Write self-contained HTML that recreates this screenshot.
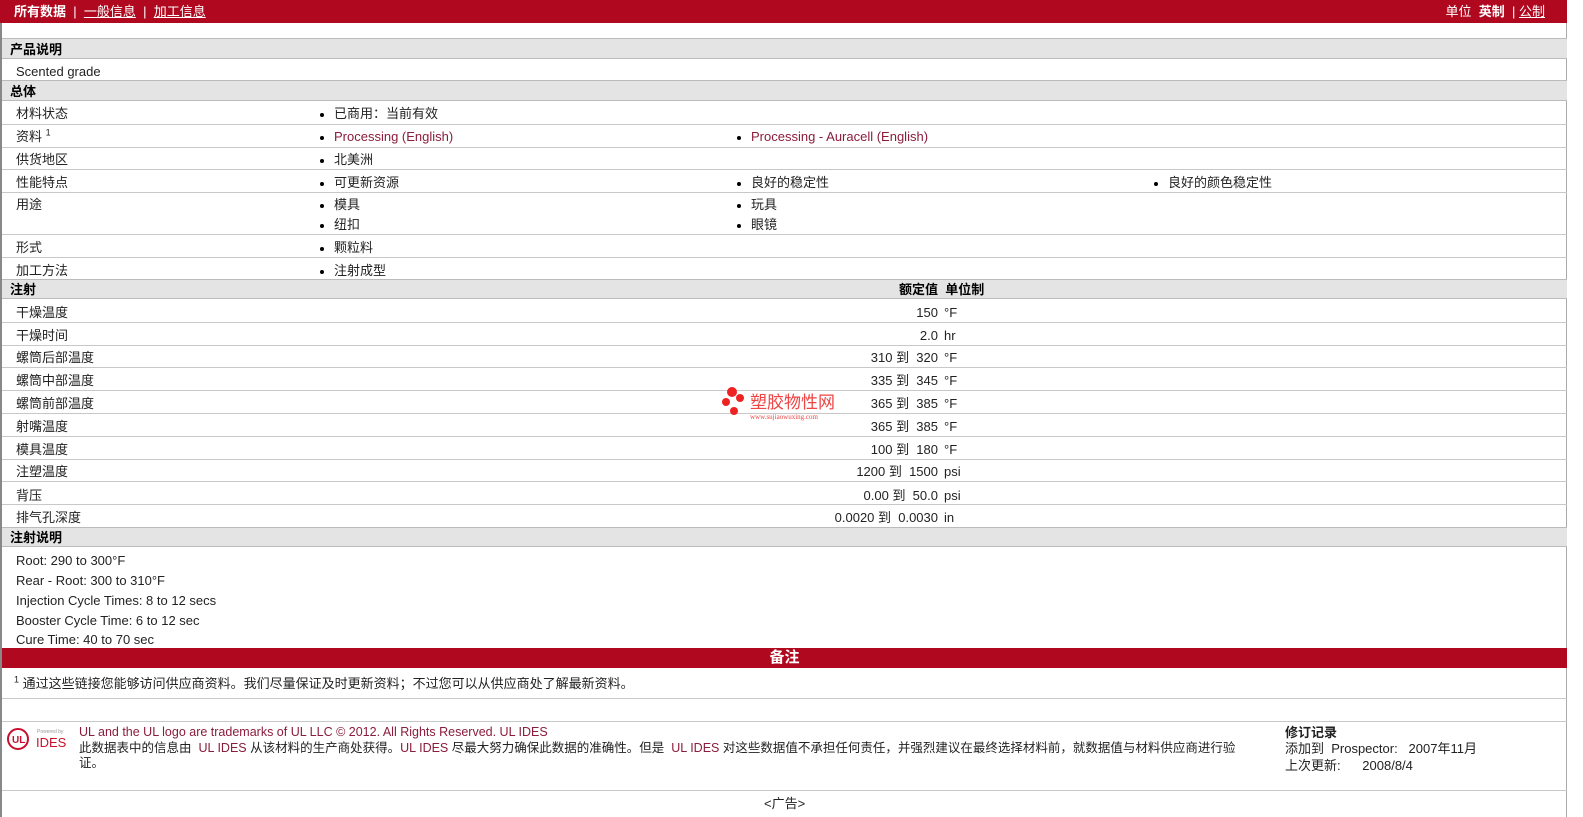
<!DOCTYPE html>
<html><head><meta charset="utf-8"><style>
body{margin:0;width:1583px;height:817px;background:#fff;font-family:"Liberation Sans","Noto Sans CJK SC",sans-serif;font-size:13px;line-height:15px;color:#222;position:relative;overflow:hidden}
.a{position:absolute;white-space:nowrap}
.top{position:absolute;left:0;top:0;width:1567px;height:23px;background:#b0091f;color:#fff}
.sh{position:absolute;left:2px;width:1565px;background:#e4e4e4;border-top:1px solid #bbb;border-bottom:1px solid #bbb;font-weight:bold;color:#000}
.ln{position:absolute;left:2px;width:1565px;height:1px;background:#c8c8c8}
.b::before{content:"";display:inline-block;width:4px;height:4px;border-radius:2px;background:#000;margin-right:10px;vertical-align:middle}
.lk{color:#8a1c3c}
.v{position:absolute;right:645px;text-align:right;white-space:nowrap}
</style></head><body>
<div style="position:absolute;left:0;top:0;width:2px;height:817px;background:#888"></div>
<div style="position:absolute;left:1566px;top:23px;width:1px;height:794px;background:#aaa"></div>
<div class="top">
<span class="a" style="left:14px;top:4px"><b>所有数据</b> &nbsp;| &nbsp;<u>一般信息</u> &nbsp;| &nbsp;<u>加工信息</u></span>
<span class="a" style="right:22px;top:4px">单位 &nbsp;<b>英制</b> &nbsp;| <u>公制</u></span>
</div>
<div class="sh" style="top:38px;height:19px"><span class="a" style="left:8px;top:3px">产品说明</span></div>
<span class="a" style="left:16px;top:64px">Scented grade</span>
<div class="sh" style="top:80px;height:19px"><span class="a" style="left:8px;top:3px">总体</span></div>
<span class="a" style="left:16px;top:106px">材料状态</span><span class="a b" style="left:320px;top:106px">已商用：当前有效</span>
<div class="ln" style="top:124px"></div>
<span class="a" style="left:16px;top:129px">资料 <sup style="font-size:9px;line-height:0">1</sup></span><span class="a b lk" style="left:320px;top:129px">Processing (English)</span><span class="a b lk" style="left:737px;top:129px">Processing - Auracell (English)</span>
<div class="ln" style="top:147px"></div>
<span class="a" style="left:16px;top:152px">供货地区</span><span class="a b" style="left:320px;top:152px">北美洲</span>
<div class="ln" style="top:169px"></div>
<span class="a" style="left:16px;top:175px">性能特点</span><span class="a b" style="left:320px;top:175px">可更新资源</span><span class="a b" style="left:737px;top:175px">良好的稳定性</span><span class="a b" style="left:1154px;top:175px">良好的颜色稳定性</span>
<div class="ln" style="top:192px"></div>
<span class="a" style="left:16px;top:197px">用途</span><span class="a b" style="left:320px;top:197px">模具</span><span class="a b" style="left:737px;top:197px">玩具</span><span class="a b" style="left:320px;top:217px">纽扣</span><span class="a b" style="left:737px;top:217px">眼镜</span>
<div class="ln" style="top:234px"></div>
<span class="a" style="left:16px;top:240px">形式</span><span class="a b" style="left:320px;top:240px">颗粒料</span>
<div class="ln" style="top:257px"></div>
<span class="a" style="left:16px;top:263px">加工方法</span><span class="a b" style="left:320px;top:263px">注射成型</span>
<div class="sh" style="top:279px;height:18px"><span class="a" style="left:8px;top:2px">注射</span><span class="a" style="left:897px;top:2px">额定值 &nbsp;单位制</span></div>
<span class="a" style="left:16px;top:305px">干燥温度</span><span class="v" style="top:305px">150</span><span class="a" style="left:944px;top:305px">°F</span>
<div class="ln" style="top:322px"></div>
<span class="a" style="left:16px;top:328px">干燥时间</span><span class="v" style="top:328px">2.0</span><span class="a" style="left:944px;top:328px">hr</span>
<div class="ln" style="top:345px"></div>
<span class="a" style="left:16px;top:350px">螺筒后部温度</span><span class="v" style="top:350px">310 到 &nbsp;320</span><span class="a" style="left:944px;top:350px">°F</span>
<div class="ln" style="top:367px"></div>
<span class="a" style="left:16px;top:373px">螺筒中部温度</span><span class="v" style="top:373px">335 到 &nbsp;345</span><span class="a" style="left:944px;top:373px">°F</span>
<div class="ln" style="top:390px"></div>
<span class="a" style="left:16px;top:396px">螺筒前部温度</span><span class="v" style="top:396px">365 到 &nbsp;385</span><span class="a" style="left:944px;top:396px">°F</span>
<div class="ln" style="top:413px"></div>
<span class="a" style="left:16px;top:419px">射嘴温度</span><span class="v" style="top:419px">365 到 &nbsp;385</span><span class="a" style="left:944px;top:419px">°F</span>
<div class="ln" style="top:436px"></div>
<span class="a" style="left:16px;top:442px">模具温度</span><span class="v" style="top:442px">100 到 &nbsp;180</span><span class="a" style="left:944px;top:442px">°F</span>
<div class="ln" style="top:459px"></div>
<span class="a" style="left:16px;top:464px">注塑温度</span><span class="v" style="top:464px">1200 到 &nbsp;1500</span><span class="a" style="left:944px;top:464px">psi</span>
<div class="ln" style="top:481px"></div>
<span class="a" style="left:16px;top:488px">背压</span><span class="v" style="top:488px">0.00 到 &nbsp;50.0</span><span class="a" style="left:944px;top:488px">psi</span>
<div class="ln" style="top:504px"></div>
<span class="a" style="left:16px;top:510px">排气孔深度</span><span class="v" style="top:510px">0.0020 到 &nbsp;0.0030</span><span class="a" style="left:944px;top:510px">in</span>
<div class="sh" style="top:527px;height:18px"><span class="a" style="left:8px;top:2px">注射说明</span></div>
<span class="a" style="left:16px;top:553px">Root: 290 to 300°F</span>
<span class="a" style="left:16px;top:573px">Rear - Root: 300 to 310°F</span>
<span class="a" style="left:16px;top:593px">Injection Cycle Times: 8 to 12 secs</span>
<span class="a" style="left:16px;top:613px">Booster Cycle Time: 6 to 12 sec</span>
<span class="a" style="left:16px;top:632px">Cure Time: 40 to 70 sec</span>
<div style="position:absolute;left:2px;top:648px;width:1565px;height:20px;background:#b0091f;color:#fff;font-weight:bold;font-size:15px;text-align:center;line-height:20px">备注</div>
<span class="a" style="left:14px;top:676px"><sup style="font-size:9px;line-height:0">1</sup> 通过这些链接您能够访问供应商资料。我们尽量保证及时更新资料；不过您可以从供应商处了解最新资料。</span>
<div class="ln" style="top:698px"></div>
<div class="ln" style="top:721px"></div>
<svg class="a" style="left:6px;top:726px" width="64" height="26"><circle cx="12" cy="13" r="10" fill="none" stroke="#c8102e" stroke-width="2"/><text x="6" y="17" font-size="10" fill="#c8102e" font-weight="bold" font-family="Liberation Sans">UL</text><text x="31" y="7" font-size="5" fill="#999" font-family="Liberation Sans">Powered by</text><text x="30" y="21" font-size="13" fill="#c8102e" font-family="Liberation Sans">IDES</text></svg>
<span class="a lk" style="left:79px;top:725px;font-size:12.5px">UL and the UL logo are trademarks of UL LLC © 2012. All Rights Reserved. UL IDES</span>
<span class="a" style="left:79px;top:741px;font-size:12.5px">此数据表中的信息由 <span class="lk">&nbsp;UL IDES</span> 从该材料的生产商处获得。<span class="lk">UL IDES</span> 尽最大努力确保此数据的准确性。但是 <span class="lk">&nbsp;UL IDES</span> 对这些数据值不承担任何责任，并强烈建议在最终选择材料前，就数据值与材料供应商进行验</span>
<span class="a" style="left:79px;top:756px;font-size:12.5px">证。</span>
<span class="a" style="left:1285px;top:725px;font-weight:bold">修订记录</span>
<span class="a" style="left:1285px;top:741px">添加到 &nbsp;Prospector: &nbsp;&nbsp;2007年11月</span>
<span class="a" style="left:1285px;top:758px">上次更新: &nbsp;&nbsp;&nbsp;&nbsp;&nbsp;2008/8/4</span>
<div class="ln" style="top:790px"></div>
<span class="a" style="left:764px;top:796px">&lt;广告&gt;</span>
<svg class="a" style="left:720px;top:386px" width="130" height="36"><circle cx="12" cy="6" r="5" fill="#e22"/><circle cx="20" cy="12" r="4" fill="#e22"/><circle cx="6" cy="16" r="4" fill="#e22"/><circle cx="14" cy="25" r="4" fill="#e22"/><text x="30" y="22" font-size="17" fill="#e44" font-family="Noto Sans CJK SC">塑胶物性网</text><text x="30" y="33" font-size="7" fill="#e44" font-family="Liberation Serif">www.sujiaowuxing.com</text></svg>
</body></html>
